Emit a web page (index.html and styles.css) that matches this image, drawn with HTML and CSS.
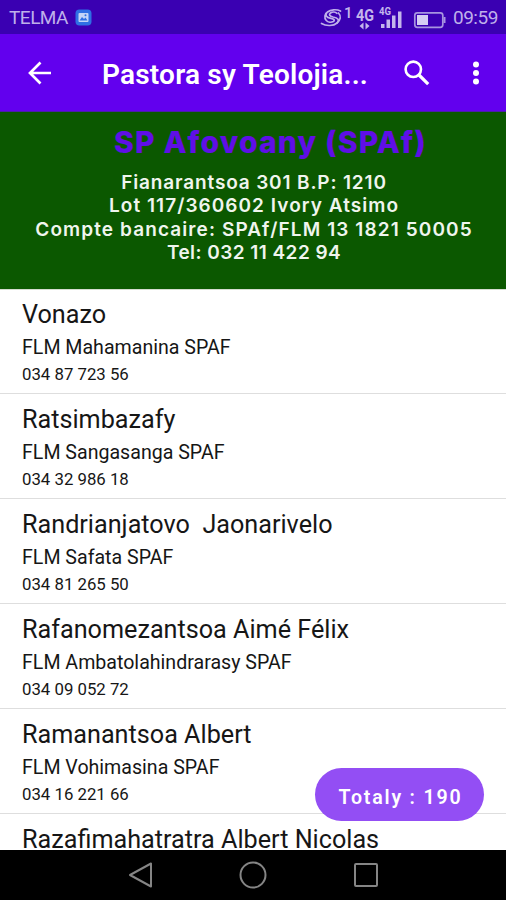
FILE: index.html
```
<!DOCTYPE html>
<html lang="mg">
<head>
    <meta charset="UTF-8">
    <meta name="viewport" content="width=device-width, initial-scale=1.0">
    <title>Pastora sy Teolojiana</title>
    <link rel="stylesheet" href="styles.css">
</head>
<body>
    <div class="screen">
        <div class="statusbar">
            <span class="carrier">TELMA</span>
            <svg class="photo-icon" width="17" height="17" viewBox="0 0 17 17">
                <rect x="0.5" y="0.5" width="16" height="16" rx="4" fill="#2f6fe4"/>
                <rect x="3.5" y="4" width="10" height="9" rx="1" fill="#c3d4f7"/>
                <path d="M4.5 11.5l2.5-3.5 2 2 1.5-1.5 2 3z" fill="#2f6fe4"/>
                <circle cx="10.5" cy="6.3" r="1" fill="#2f6fe4"/>
            </svg>
            <svg class="status-icons" width="126" height="28" viewBox="0 0 126 28">
                <g fill="none" stroke="#bfb0ea" stroke-width="1.7" stroke-linecap="round">
                    <path d="M1.500 21.500c5 3 12 2.500 15.500-.5 3-3 1-5-4-6-3.500-.8-4.500-2.500-2.500-4 2-1.300 5-1 6.500.3"/>
                    <path d="M20.500 9c-4-2-10-1.500-13 1-3 3-1.500 5.500 3.500 6.300 3.500.7 4 2.200 2.300 3.200-2 1-5.300.8-7-1-2.500-2.500-1.500-7 1.200-8.500"/>
                    <path d="M17 21c3.500-2.500 4.500-7 1.500-10"/>
                </g>
                <g fill="#c4b6ec" font-family="Roboto, sans-serif">
                    <text x="24" y="16" font-size="15" font-weight="500">1</text>
                    <text x="36" y="18.500" font-size="17" font-weight="700" textLength="18" lengthAdjust="spacingAndGlyphs">4G</text>
                    <text x="59" y="13" font-size="10" font-weight="700" textLength="12" lengthAdjust="spacingAndGlyphs">4G</text>
                    <path d="M39.500 24l4-3.500v7zM49.500 24l-4-3.500v7z"/>
                    <rect x="61" y="22" width="3.500" height="4"/>
                    <rect x="66.500" y="17.500" width="3.500" height="8.500"/>
                    <rect x="72" y="13.500" width="3.500" height="12.500"/>
                    <rect x="78" y="9.500" width="3.500" height="16.500"/>
                </g>
                <rect x="94.800" y="10.800" width="28" height="14.500" rx="2.500" fill="none" stroke="#a794e0" stroke-width="1.700"/>
                <rect x="97" y="13" width="11" height="10" fill="#d6cdf3"/>
                <rect x="123.500" y="15" width="2" height="6" fill="#a794e0"/>
            </svg>
            <span class="clock">09:59</span>
        </div>

        <div class="appbar">
            <svg width="24" height="24" viewBox="0 0 24 24">
                <path d="M23 12H2M12.500 1.500L2 12l10.500 10.500" fill="none" stroke="#fff" stroke-width="2.700"/>
            </svg>
            <h1>Pastora sy Teolojia...</h1>
            <svg class="search" width="26" height="26" viewBox="0 0 26 26">
                <circle cx="9.300" cy="9.300" r="7.700" fill="none" stroke="#fff" stroke-width="2.600"/>
                <path d="M15 15l9.200 9.200" stroke="#fff" stroke-width="3.200"/>
            </svg>
            <svg width="8" height="26" viewBox="0 0 8 26" fill="#fff">
                <circle cx="4" cy="4.500" r="3"/>
                <circle cx="4" cy="13" r="3"/>
                <circle cx="4" cy="21.500" r="3"/>
            </svg>
        </div>

        <div class="banner">
            <h2>SP Afovoany (SPAf)</h2>
            <p class="box">Fianarantsoa 301 B.P: 1210</p>
            <p class="lot">Lot 117/360602 Ivory Atsimo</p>
            <p class="bank">Compte bancaire: SPAf/FLM 13 1821 50005</p>
            <p class="tel">Tel: 032 11 422 94</p>
        </div>

        <div class="list">
            <div class="item">
                <div class="name">Vonazo</div>
                <div class="parish">FLM Mahamanina SPAF</div>
                <div class="phone">034 87 723 56</div>
            </div>
            <div class="item">
                <div class="name">Ratsimbazafy</div>
                <div class="parish">FLM Sangasanga SPAF</div>
                <div class="phone">034 32 986 18</div>
            </div>
            <div class="item">
                <div class="name">Randrianjatovo  Jaonarivelo</div>
                <div class="parish">FLM Safata SPAF</div>
                <div class="phone">034 81 265 50</div>
            </div>
            <div class="item">
                <div class="name">Rafanomezantsoa Aimé Félix</div>
                <div class="parish">FLM Ambatolahindrarasy SPAF</div>
                <div class="phone">034 09 052 72</div>
            </div>
            <div class="item">
                <div class="name">Ramanantsoa Albert</div>
                <div class="parish">FLM Vohimasina SPAF</div>
                <div class="phone">034 16 221 66</div>
            </div>
            <div class="item">
                <div class="name">Razafimahatratra Albert Nicolas</div>
            </div>
            <button class="total">Totaly : 190</button>
        </div>

        <div class="navbar">
            <svg width="28" height="28" viewBox="0 0 28 28"><path d="M3 14L24 2.500v23z"/></svg>
            <svg width="28" height="28" viewBox="0 0 28 28"><circle cx="14" cy="14" r="12.500"/></svg>
            <svg width="28" height="28" viewBox="0 0 28 28"><rect x="3" y="3" width="22" height="22" rx="1"/></svg>
        </div>
    </div>
</body>
</html>
```
FILE: styles.css
```
* {
    box-sizing: border-box;
}

body {
    margin: 0;
    font-family: Roboto, sans-serif;
    background: #fff;
}

h1, h2, p {
    margin: 0;
}

svg {
    display: block;
    flex-shrink: 0;
}

.screen {
    width: 506px;
    height: 900px;
    display: flex;
    flex-direction: column;
    overflow: hidden;
}

.statusbar {
    height: 34px;
    flex-shrink: 0;
    display: flex;
    align-items: center;
    padding: 1px 8px 0 9px;
    background: #3a00b2;
    color: #bfb0ea;
}

.carrier {
    font-size: 19px;
    letter-spacing: -0.5px;
}

.photo-icon {
    margin-left: 7px;
}

.status-icons {
    margin: -3px 0 0 auto;
}

.clock {
    width: 45px;
    margin-left: 7px;
    font-size: 19px;
    letter-spacing: -0.5px;
    white-space: nowrap;
}

.appbar {
    height: 78px;
    flex-shrink: 0;
    display: flex;
    align-items: center;
    padding: 0 26px 0 28px;
    background: #6200ee;
    border-bottom: 1px solid #4a1fa8;
    color: #fff;
}

.appbar h1 {
    width: 268px;
    margin: 4px 34px 0 50px;
    font-size: 28px;
    font-weight: 600;
    letter-spacing: 0.2px;
    white-space: nowrap;
}

.search {
    margin-right: auto;
}

.banner {
    height: 177px;
    flex-shrink: 0;
    padding-top: 10px;
    background: #0b5800;
    color: #f0f5ee;
    text-align: center;
}

.banner h2 {
    height: 49px;
    padding-left: 35px;
    font-family: Inter, sans-serif;
    font-size: 30px;
    font-weight: 800;
    letter-spacing: 1.2px;
    line-height: 40px;
    color: #5f0fe6;
    white-space: nowrap;
}

.banner p {
    padding-left: 2px;
    font-family: Inter, sans-serif;
    font-size: 19px;
    font-weight: 600;
    line-height: 23.4px;
    white-space: nowrap;
}

.banner .box {
    letter-spacing: 0.85px;
}

.banner .lot {
    letter-spacing: 1.05px;
}

.banner .bank {
    letter-spacing: 1.1px;
}

.banner .tel {
    letter-spacing: 0.45px;
}

.list {
    position: relative;
    flex: 1;
    min-height: 0;
    overflow: hidden;
    border-top: 1px solid #d5dcd0;
    color: #161616;
}

.item {
    height: 105px;
    padding: 9px 22px 0;
    border-bottom: 1px solid #dedede;
}

.item:first-child {
    height: 104px;
}

.item + .item {
    padding-top: 10px;
}

.name {
    font-size: 25.2px;
    line-height: 32px;
    white-space: pre;
}

.parish {
    margin-top: 3px;
    font-size: 19.6px;
    line-height: 27px;
}

.phone {
    margin-top: 1px;
    font-size: 16.8px;
    line-height: 24px;
}

/* floating count over the list */
.total {
    position: absolute;
    right: 22px;
    bottom: 29px;
    width: 169px;
    height: 53px;
    padding: 5px 0 0 2px;
    border: none;
    border-radius: 27px;
    background: #934ef4;
    color: #fff;
    font-family: Roboto, sans-serif;
    font-size: 19.6px;
    font-weight: 600;
    letter-spacing: 1.8px;
    white-space: nowrap;
}

.navbar {
    height: 50px;
    flex-shrink: 0;
    display: flex;
    justify-content: center;
    gap: 84.5px;
    padding-top: 11px;
    background: #000;
}

.navbar svg {
    fill: none;
    stroke: #858585;
    stroke-width: 2;
    stroke-linejoin: round;
}
```
